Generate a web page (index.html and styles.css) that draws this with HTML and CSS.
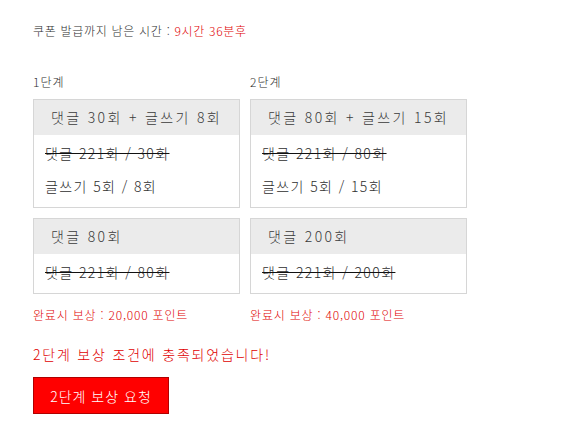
FILE: index.html
```html
<!DOCTYPE html>
<html lang="ko">
<head>
<meta charset="utf-8">
<link rel="stylesheet" href="styles.css">
</head>
<body>
<div class="page">
  <p class="timer">쿠폰 발급까지 남은 시간 : <span class="red">9시간 36분후</span></p>
  <div class="stages">
    <div class="stage">
      <div class="stage-label">1단계</div>
      <div class="box">
        <div class="box-head">댓글 30회 + 글쓰기 8회</div>
        <div class="box-body">
          <div class="row done">댓글 221회 / 30회</div>
          <div class="row">글쓰기 5회 / 8회</div>
        </div>
      </div>
      <div class="box">
        <div class="box-head">댓글 80회</div>
        <div class="box-body">
          <div class="row done">댓글 221회 / 80회</div>
        </div>
      </div>
      <div class="reward">완료시 보상 : 20,000 포인트</div>
    </div>
    <div class="stage">
      <div class="stage-label">2단계</div>
      <div class="box">
        <div class="box-head">댓글 80회 + 글쓰기 15회</div>
        <div class="box-body">
          <div class="row done">댓글 221회 / 80회</div>
          <div class="row">글쓰기 5회 / 15회</div>
        </div>
      </div>
      <div class="box">
        <div class="box-head">댓글 200회</div>
        <div class="box-body">
          <div class="row done">댓글 221회 / 200회</div>
        </div>
      </div>
      <div class="reward">완료시 보상 : 40,000 포인트</div>
    </div>
  </div>
  <p class="message">2단계 보상 조건에 충족되었습니다!</p>
  <button class="request">2단계 보상 요청</button>
</div>
</body>
</html>
```
FILE: styles.css
```css
html, body {
  margin: 0;
  padding: 0;
  background: #fff;
}
body {
  font-family: "Noto Sans CJK KR", "Noto Sans", sans-serif;
  font-weight: 300;
  color: #2e2e2e;
}
.page {
  padding: 24px 0 0 33px;
}
.timer {
  margin: 0;
  font-size: 12px;
  line-height: 14px;
  letter-spacing: 0.7px;
  color: #2e2e2e;
}
.red {
  color: #e00000;
}
.stages {
  display: flex;
  align-items: flex-start;
  gap: 10px;
  margin-top: 36px;
}
.stage {
  display: flex;
  flex-direction: column;
}
.stage-label {
  font-size: 12px;
  line-height: 16px;
  letter-spacing: 1px;
  color: #2e2e2e;
  margin-bottom: 9px;
}
.box {
  border: 1px solid #d6d6d6;
  margin-bottom: 10px;
}
.box-head {
  background: #ebebeb;
  height: 35px;
  line-height: 35px;
  padding: 0 17px;
  white-space: nowrap;
  font-size: 14px;
  letter-spacing: 2.35px;
  color: #3a3a3a;
}
.box-body {
  padding: 2px 0 4px 11px;
}
.row {
  font-size: 14px;
  line-height: 33px;
  letter-spacing: 1.4px;
  color: #2e2e2e;
  white-space: nowrap;
}
.row.done {
  text-decoration: line-through;
  text-decoration-color: #111;
}
.reward {
  font-size: 12px;
  line-height: 16px;
  letter-spacing: 0.8px;
  color: #e00000;
  margin-top: 3px;
}
.message {
  margin: 21px 0 0;
  font-size: 14px;
  line-height: 20px;
  color: #e00000;
  letter-spacing: 1.8px;
}
.request {
  display: block;
  margin-top: 13px;
  width: 136px;
  height: 37px;
  background: #ff0000;
  border: 1px solid #b00000;
  color: #fff;
  font-family: inherit;
  font-weight: 300;
  font-size: 14px;
  letter-spacing: 1px;
  padding: 0;
}
```
